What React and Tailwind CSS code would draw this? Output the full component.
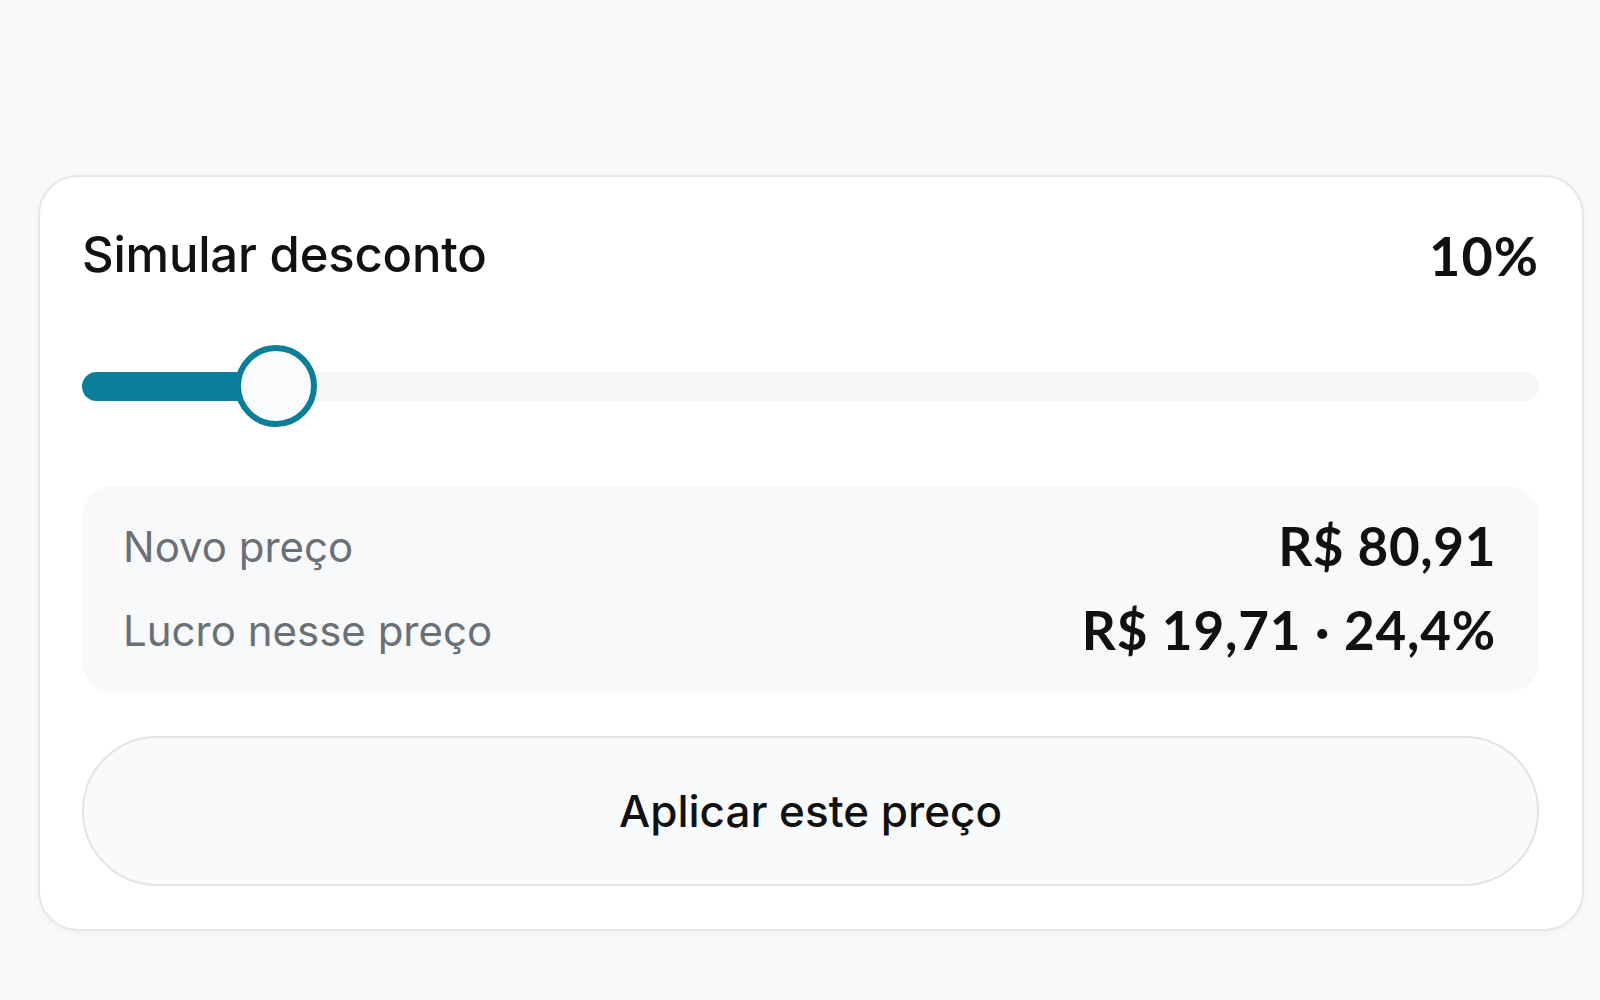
import React from 'react';

const DISCOUNT = 10;

export default function App() {
    return (
        <div className="min-h-screen w-full bg-[#f8f9fb] pt-[175px] pl-[38px]">
            {/* Discount card */}
            <div className="w-[1546px] rounded-[40px] border-2 border-[#e6e7ea] bg-white pl-[42px] pr-[43px] pt-[48px] pb-[43px] shadow-[0_2px_6px_rgba(0,0,0,0.04)]">
                <div className="flex items-center justify-between h-[60px]">
                    <span className="font-['Inter',sans-serif] text-[49px] font-medium text-[#111111] tracking-[-0.2px]">
                        Simular desconto
                    </span>
                    <span className="font-['Lato',sans-serif] text-[54px] font-bold text-[#111111] tracking-[1px]">
                        {DISCOUNT}%
                    </span>
                </div>

                {/* Slider */}
                <div className="relative mt-[60px] h-[82px] flex items-center">
                    <div className="h-[29px] w-full rounded-full bg-[#f6f7f8]">
                        <div className="h-full w-[175px] rounded-full bg-[#0b7f99]" />
                    </div>
                    <div className="absolute left-[153px] top-0 h-[82px] w-[82px] rounded-full border-[6px] border-[#0b7f99] bg-[#fafbfc]" />
                </div>

                {/* Result box */}
                <div className="mt-[59px] rounded-[31px] bg-[#f8f9fb] pl-[41px] pr-[43px] pt-[32px] pb-[34px] flex flex-col gap-[28px]">
                    <div className="flex items-center justify-between h-[56px]">
                        <span className="font-['Inter',sans-serif] text-[42px] text-[#6b6f76]">Novo preço</span>
                        <span className="font-['Lato',sans-serif] text-[53px] font-bold text-[#111111] tracking-[0.6px]">R$ 80,91</span>
                    </div>
                    <div className="flex items-center justify-between h-[56px]">
                        <span className="font-['Inter',sans-serif] text-[42px] text-[#6b6f76]">Lucro nesse preço</span>
                        <span className="font-['Lato',sans-serif] text-[53px] font-bold text-[#111111] tracking-[0.8px]">R$ 19,71 · 24,4%</span>
                    </div>
                </div>

                <button className="mt-[44px] flex h-[150px] w-full items-center justify-center rounded-full border-2 border-[#e3e4e7] bg-[#f9fafb] font-['Inter',sans-serif] text-[44px] font-medium text-[#111111]">
                    Aplicar este preço
                </button>
            </div>
        </div>
    );
}
